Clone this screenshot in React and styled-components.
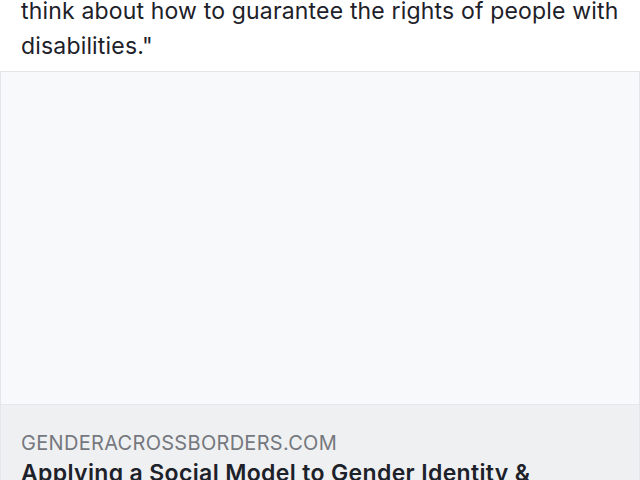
import React from 'react';
import styled, { createGlobalStyle } from 'styled-components';

const GlobalStyle = createGlobalStyle`
  html, body {
    margin: 0;
    padding: 0;
    background: #ffffff;
    overflow: hidden;
  }
  body {
    font-family: Inter, 'Liberation Sans', Arial, sans-serif;
    -webkit-font-smoothing: antialiased;
  }
`;

const Page = styled.div`
  width: 640px;
  height: 480px;
  overflow: hidden;
  display: flex;
  flex-direction: column;
`;

const PostText = styled.p`
  margin: -6px 0 0;
  padding: 0 21px 5px;
  font-size: 23px;
  line-height: 35px;
  letter-spacing: 0.17px;
  color: #1d2129;
`;

const LinkCard = styled.div`
  display: flex;
  flex-direction: column;
  border: 1px solid #e4e6ea;
  border-bottom: none;
  margin-top: 2px;
`;

const Preview = styled.div`
  height: 332px;
  background: #f8f9fb;
`;

const Footer = styled.div`
  background: #eff0f2;
  border-top: 1px solid #e4e6ea;
  padding: 25px 20px 20px;
`;

const Domain = styled.div`
  font-size: 20px;
  line-height: 26px;
  letter-spacing: 0.3px;
  color: #75787e;
  text-transform: uppercase;
`;

const Title = styled.div`
  margin-top: 3px;
  font-size: 23px;
  line-height: 28px;
  letter-spacing: 0.35px;
  font-weight: 600;
  color: #1d2129;
`;

export default function App() {
  return (
    <>
      <GlobalStyle />
      <Page>
        <PostText>
          think about how to guarantee the rights of people with
          <br />
          disabilities."
        </PostText>
        <LinkCard>
          <Preview />
          <Footer>
            <Domain>genderacrossborders.com</Domain>
            <Title>Applying a Social Model to Gender Identity &amp;</Title>
          </Footer>
        </LinkCard>
      </Page>
    </>
  );
}
